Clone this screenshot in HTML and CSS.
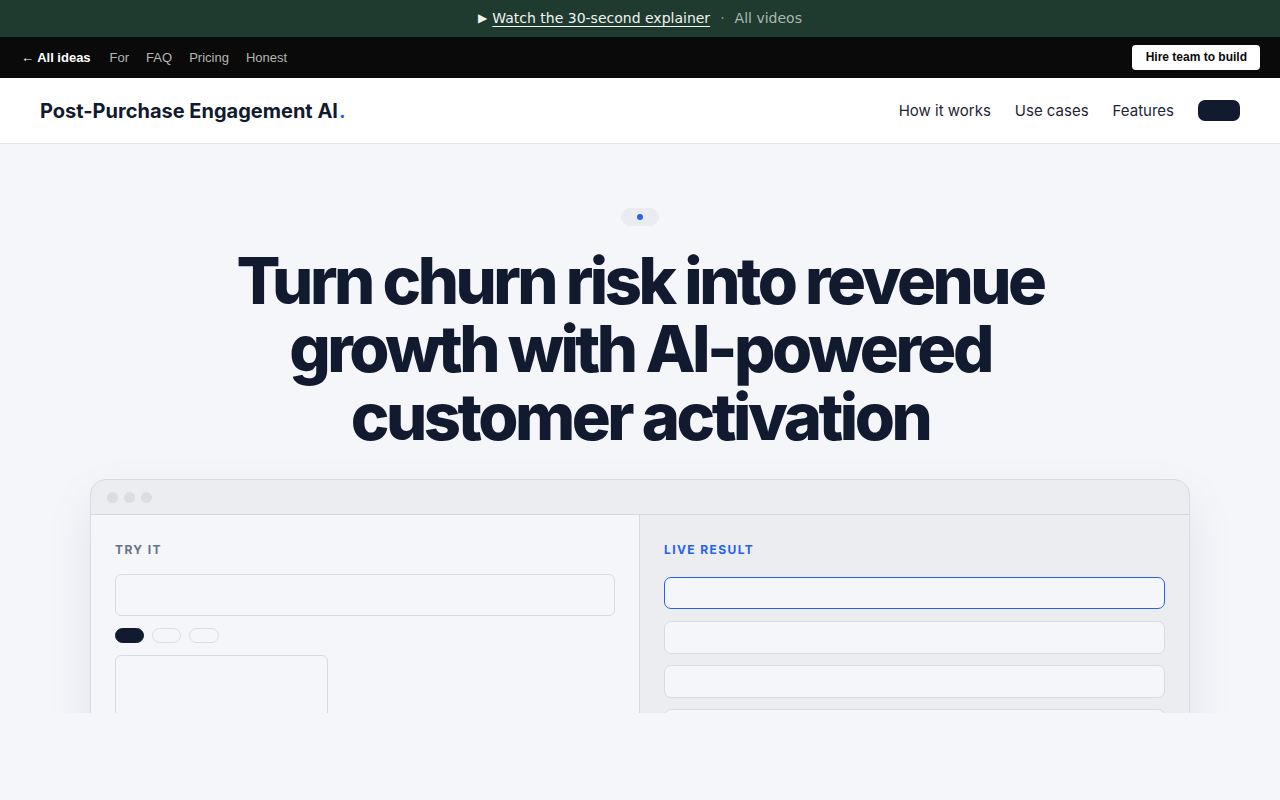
FILE: index.html
```html
<!DOCTYPE html>
<html lang="en">
<head>
  <meta charset="UTF-8">
  <meta name="viewport" content="width=device-width, initial-scale=1.0">
  <title>Post-Purchase Engagement AI</title>
  <link rel="stylesheet" href="styles.css">
</head>
<body>
  <div class="promo">
    <span class="play">&#9654;</span>
    <a href="#" class="promo-link">Watch the 30-second explainer</a>
    <span class="sep">&middot;</span>
    <a href="#" class="promo-muted">All videos</a>
  </div>

  <div class="topbar">
    <nav class="topbar-links">
      <a href="#" class="back">&larr; All ideas</a>
      <a href="#">For</a>
      <a href="#">FAQ</a>
      <a href="#">Pricing</a>
      <a href="#">Honest</a>
    </nav>
    <a href="#" class="hire">Hire team to build</a>
  </div>

  <header class="site-header">
    <div class="logo">Post-Purchase Engagement AI<span class="dot">.</span></div>
    <nav class="main-nav">
      <a href="#">How it works</a>
      <a href="#">Use cases</a>
      <a href="#">Features</a>
      <a href="#" class="cta"></a>
    </nav>
  </header>

  <section class="hero">
    <div class="badge"><span></span></div>
    <h1>Turn churn risk into revenue growth with AI-powered customer activation</h1>

    <div class="window">
      <div class="window-bar">
        <i></i><i></i><i></i>
      </div>
      <div class="window-body">
        <div class="pane pane-try">
          <div class="label">TRY IT</div>
          <div class="field"></div>
          <div class="chips">
            <span class="chip active"></span>
            <span class="chip"></span>
            <span class="chip"></span>
          </div>
          <div class="box"></div>
        </div>
        <div class="pane pane-result">
          <div class="label blue">LIVE RESULT</div>
          <div class="result selected"></div>
          <div class="result"></div>
          <div class="result"></div>
          <div class="result"></div>
        </div>
      </div>
    </div>
  </section>
</body>
</html>
```

FILE: styles.css
```css
* {
  box-sizing: border-box;
}
body {
  margin: 0;
  background-color: #f5f6fa;
  font-family: Inter, 'Noto Sans', sans-serif;
  color: #111a2e;
}
a {
  text-decoration: none;
  color: inherit;
}

/* promo strip */
.promo {
  height: 37px;
  background-color: #1f3a2f;
  display: flex;
  align-items: center;
  justify-content: center;
  gap: 5px;
  padding-bottom: 1px;
  font-family: 'DejaVu Sans', sans-serif;
  font-size: 14px;
  color: #f0f3f1;
}
.promo .play {
  font-size: 12px;
}
.promo-link {
  text-decoration: underline;
  text-underline-offset: 3px;
}
.promo .sep {
  color: #8fa39a;
  margin: 0 5px;
}
.promo-muted {
  color: #a9b8b1;
}

/* ideas bar */
.topbar {
  height: 41px;
  background-color: #0a0a0a;
  display: flex;
  align-items: center;
  justify-content: space-between;
  padding: 0 20px 1px 21px;
  font-family: 'Liberation Sans', Arial, sans-serif;
  font-size: 13px;
}
.topbar-links {
  display: flex;
  gap: 17px;
}
.topbar-links a {
  color: #b5b5b5;
}
.topbar-links .back {
  color: #ffffff;
  font-weight: bold;
  margin-right: 2px;
}
.hire {
  background-color: #ffffff;
  color: #0a0a0a;
  font-weight: bold;
  font-size: 12px;
  padding: 5px 13px 6px 14px;
  border-radius: 4px;
}

/* site header */
.site-header {
  height: 66px;
  background-color: #ffffff;
  border-bottom: 1px solid #e3e5ea;
  display: flex;
  align-items: center;
  justify-content: space-between;
  padding: 0 40px;
}
.logo {
  font-size: 20px;
  font-weight: 700;
}
.logo .dot {
  color: #2563eb;
  margin-left: 1px;
}
.main-nav {
  display: flex;
  align-items: center;
  gap: 24px;
  font-size: 15px;
  color: #1e2536;
}
.main-nav .cta {
  width: 42px;
  height: 21px;
  background-color: #111a2e;
  border-radius: 7px;
}

/* hero */
.hero {
  height: 569px;
  overflow: hidden;
  padding-top: 64px;
  display: flex;
  flex-direction: column;
  align-items: center;
}
.hero > * {
  flex-shrink: 0;
}
.badge {
  width: 38px;
  height: 18px;
  border-radius: 9px;
  background-color: #eaecf1;
  display: flex;
  align-items: center;
  justify-content: center;
}
.badge span {
  width: 6px;
  height: 6px;
  border-radius: 50%;
  background-color: #2563eb;
}
.hero h1 {
  margin: 21px 0 0;
  max-width: 860px;
  text-align: center;
  font-size: 65px;
  font-weight: 800;
  line-height: 68px;
  letter-spacing: -3.5px;
  color: #111a2e;
}

/* app window mockup */
.window {
  margin-top: 28px;
  width: 1100px;
  border: 1px solid #d9dbe1;
  border-radius: 16px;
  overflow: hidden;
  background-color: #ecedf1;
  box-shadow: 0 20px 50px rgba(17, 26, 46, 0.08);
}
.window-bar {
  height: 35px;
  border-bottom: 1px solid #d6d8de;
  display: flex;
  align-items: center;
  gap: 6px;
  padding-left: 16px;
}
.window-bar i {
  width: 11px;
  height: 11px;
  border-radius: 50%;
  background-color: #dcdde1;
}
.window-body {
  display: grid;
  grid-template-columns: 549px 1fr;
  height: 300px;
}
.pane {
  padding: 27px 24px;
}
.pane-try {
  background-color: #f5f6fa;
  border-right: 1px solid #d9dbe1;
}
.pane-result {
  background-color: #ecedf1;
}
.label {
  font-size: 12px;
  font-weight: 700;
  letter-spacing: 1.4px;
  color: #64748b;
  margin-bottom: 17px;
}
.label.blue {
  color: #2563eb;
  margin-bottom: 20px;
}
.field {
  height: 42px;
  border: 1px solid #d9dbe1;
  border-radius: 6px;
  background-color: #f5f6fa;
}
.chips {
  display: flex;
  gap: 8px;
  margin: 12px 0;
}
.chip {
  width: 29px;
  height: 15px;
  border-radius: 8px;
  border: 1px solid #dcdee3;
}
.chip.active {
  background-color: #111a2e;
  border-color: #111a2e;
}
.chip:last-child {
  width: 30px;
}
.box {
  width: 213px;
  height: 120px;
  border: 1px solid #d9dbe1;
  border-radius: 6px;
}
.result {
  height: 33px;
  border: 1px solid #d9dbe1;
  border-radius: 7px;
  background-color: #f5f6fa;
  margin-bottom: 11px;
}
.result.selected {
  border-color: #2563eb;
  height: 32px;
  margin-bottom: 12px;
}
```
